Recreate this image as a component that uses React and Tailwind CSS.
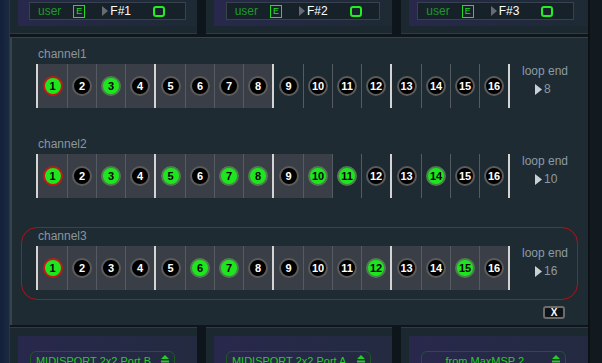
import React from 'react';

const font = { fontFamily: '"Liberation Sans", Arial, sans-serif' };

const channels = [
  { name: 'channel1', active: [1, 3], loopEnd: 8, selected: false },
  { name: 'channel2', active: [1, 3, 5, 7, 8, 10, 11, 14], loopEnd: 10, selected: false },
  { name: 'channel3', active: [1, 6, 7, 12, 15], loopEnd: 16, selected: true },
];

const topPanels = [
  { note: 'F#1', pad: 'pl-[11px]', box: 'w-[157px]' },
  { note: 'F#2', pad: 'pl-[12px]', box: 'w-[154px]' },
  { note: 'F#3', pad: 'pl-[8px]', box: 'w-[157px]' },
];

const ports = ['MIDISPORT 2x2 Port B', 'MIDISPORT 2x2 Port A', 'from MaxMSP 2'];

function Step({ n, on, cursor }) {
  let ring = 'bg-black border-[#5c5c5c] text-white';
  if (on) ring = 'bg-[#1ee61e] border-[#4f7d4f] text-black';
  if (cursor) ring = 'bg-[#1ee61e] border-[#c21a1a] text-black';
  return (
    <div className={`w-[20px] h-[20px] rounded-full border-2 flex items-center justify-center text-[11px] font-bold leading-none ${ring}`}>
      {n}
    </div>
  );
}

function StepRow({ active, loopEnd }) {
  return (
    <div className="flex h-[44px]">
      {[0, 1, 2, 3].map((g) => (
        <React.Fragment key={g}>
          <div className="w-[2px] bg-[#d4d4d4]" />
          {[0, 1, 2, 3].map((i) => {
            const n = g * 4 + i + 1;
            return (
              <div
                key={n}
                className={`w-[29px] flex items-center justify-center ${i > 0 ? 'border-l border-[#555b63]' : ''} ${n <= loopEnd ? 'bg-[#3a3e46]' : ''}`}
              >
                <Step n={n} on={active.includes(n)} cursor={n === 1} />
              </div>
            );
          })}
        </React.Fragment>
      ))}
      <div className="w-[2px] bg-[#d4d4d4]" />
    </div>
  );
}

function Channel({ name, active, loopEnd, selected }) {
  return (
    <div className={`ml-[9px] w-[557px] rounded-[16px] border pt-[1px] pb-[9px] pl-[14px] ${selected ? 'border-[#a8161a]' : 'border-transparent'}`}>
      <div className="h-[14px] leading-[14px] text-[12px] text-[#8b959b] pl-[2px]">{name}</div>
      <div className="mt-[3px] flex">
        <StepRow active={active} loopEnd={loopEnd} />
        <div className="ml-[12px] flex flex-col">
          <div className="text-[12px] leading-[14px] text-[#8d9aa2]">loop end</div>
          <div className="mt-[4px] pl-[13px] flex items-center gap-[2px]">
            <svg width="7" height="11" viewBox="0 0 7 11"><path d="M0 0 L7 5.5 L0 11 Z" fill="#c9d1d5" /></svg>
            <span className="text-[12px] leading-[14px] text-[#8d9aa2]">{loopEnd}</span>
          </div>
        </div>
      </div>
    </div>
  );
}

function TopPanel({ note, pad, box }) {
  return (
    <div className="w-[187px] h-[34px] bg-[#1b2830] border-b border-[#2e3b43] pl-[8px]">
      <div className={`h-[26px] bg-gradient-to-r from-[#28284c] to-[#1d2a34] pt-[2px] ${pad}`}>
        <div className={`${box} h-[18px] bg-[#17212a] border border-[#37434c] flex items-center`}>
          <span className="ml-[8px] text-[12px] text-[#1e9a28]">user</span>
          <span className="ml-[12px] w-[12px] h-[13px] border border-[#22dd22] text-[#22dd22] text-[9px] leading-none flex items-center justify-center">E</span>
          <svg className="ml-[17px]" width="6" height="10" viewBox="0 0 6 10"><path d="M0 0 L6 5 L0 10 Z" fill="#666c72" /></svg>
          <span className="ml-[2px] text-[12px] text-white">{note}</span>
          <span className="ml-[22px] w-[12px] h-[11px] rounded-[3px] border-2 border-[#22ee22]" />
        </div>
      </div>
    </div>
  );
}

function BottomPanel({ label }) {
  return (
    <div className="w-[187px] h-[36px] bg-[#1b2830] border-t border-[#2e3b43] pl-[8px] pt-[8px]">
      <div className="h-[28px] bg-gradient-to-r from-[#28284c] to-[#232a40] pl-[12px] pt-[15px]">
        <div className="w-[145px] h-[20px] rounded-[6px] border border-[#1d5a22] flex justify-center pr-[18px] relative">
          <span className="whitespace-nowrap text-[11px] leading-[13px] pt-[3px] text-[#25cc25]">{label}</span>
          <svg className="absolute right-[5px] top-[3px]" width="8" height="8" viewBox="0 0 8 8">
            <path d="M4 0 L8 4 L0 4 Z" fill="#25cc25" />
            <rect x="0" y="5.5" width="8" height="2" fill="#25cc25" />
          </svg>
        </div>
      </div>
    </div>
  );
}

export default function App() {
  return (
    <div className="w-[602px] h-[363px] overflow-hidden flex bg-[#0f161b]" style={font}>
      <div className="w-[10px] bg-gradient-to-r from-[#13203a] to-[#1b2940] border-r border-[#2a3644]" />
      <div className="w-[578px] flex flex-col">
        <div className="flex gap-[9px] h-[34px]">
          {topPanels.map((p) => (
            <TopPanel key={p.note} {...p} />
          ))}
        </div>
        <div className="mt-[3px] h-[288px] bg-[#1e2b33] border-t border-l-2 border-[#35434c] flex flex-col pt-[7px]">
          {channels.map((c, i) => (
            <div key={c.name} className={i === 1 ? 'mt-[17px]' : i === 2 ? 'mt-[19px]' : ''}>
              <Channel {...c} />
            </div>
          ))}
          <div className="self-end mr-[23px] mt-[6px] w-[22px] h-[13px] rounded-[3px] border-2 border-[#6c6c6c] bg-[#0e1317] flex items-center justify-center text-[10px] font-bold text-white leading-none">
            X
          </div>
        </div>
        <div className="mt-[2px] flex gap-[9px]">
          {ports.map((p) => (
            <BottomPanel key={p} label={p} />
          ))}
        </div>
      </div>
      <div className="w-[14px] bg-[#121a20] border-l-2 border-[#0b1115]" />
    </div>
  );
}
